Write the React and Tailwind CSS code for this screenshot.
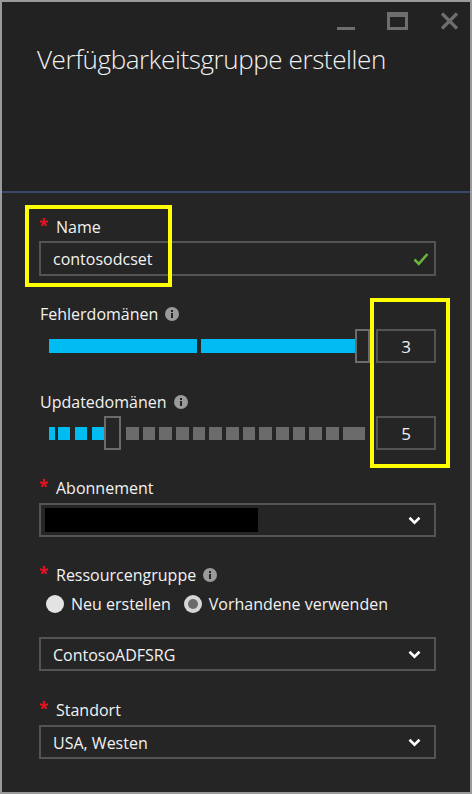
import React from "react";

// small gray info bubble next to some labels
const Info = () => (
    <span className="ml-[7px] inline-flex h-[14px] w-[14px] items-center justify-center rounded-full bg-[#9a9a9a]">
        <svg width="14" height="14" viewBox="0 0 14 14">
            <rect x="6" y="3" width="2" height="2" fill="#252525" />
            <rect x="6" y="6" width="2" height="5" fill="#252525" />
        </svg>
    </span>
);

// label with optional red star
const Label = ({ text, required, info, className }) => (
    <div className={"flex h-[24px] items-center pt-[3px] text-[16px] " + (className || "")}>
        {required ? (
            <span className="w-[17px] self-start pt-[1px] text-[17px] font-bold leading-[18px] text-[#e81123]">*</span>
        ) : (
            <span className="w-[1px]" />
        )}
        <span>{text}</span>
        {info && <Info />}
    </div>
);

const Chevron = () => (
    <svg width="13" height="9" viewBox="0 0 13 9" className="ml-auto">
        <path d="M1.5 1.8 L6.5 6.6 L11.5 1.8" stroke="#ffffff" strokeWidth="2.6" fill="none" />
    </svg>
);

const Dropdown = ({ children, className }) => (
    <div className={"flex h-[34px] items-center border-2 border-[#545454] pr-[13px] " + (className || "")}>
        {children}
        <Chevron />
    </div>
);

const ValueBox = ({ value }) => (
    <div className="ml-auto flex h-[34px] w-[60px] items-center justify-center border-2 border-[#545454] pt-[1px] text-[17px]">{value}</div>
);

const Thumb = ({ w }) => <div className={"h-[34px] shrink-0 border-2 border-[#6b6b6b] bg-[#252525] " + w} />;

const App = () => {
    const graySegs = Array.from({ length: 13 });

    return (
        <div className="relative flex h-[794px] w-[472px] flex-col border-2 border-[#9a9a9a] bg-[#252525] font-['Open_Sans',sans-serif] text-[#f2f2f2]">
            {/* header */}
            <div className="h-[189px] shrink-0 bg-[#222222]">
                <div className="flex h-[18px] items-end justify-end gap-[32px] pr-[11px] mt-[10px]">
                    <div className="h-[3px] w-[18px] bg-[#6e6e6e]" />
                    <div className="h-[18px] w-[21px] border-[3px] border-t-[5px] border-[#6e6e6e]" />
                    <svg width="19" height="18" viewBox="0 0 19 18">
                        <path d="M2 1.5 L17 16.5 M17 1.5 L2 16.5" stroke="#6e6e6e" strokeWidth="3.2" />
                    </svg>
                </div>
                <h1 className="mt-[11px] pl-[35px] text-[26px] font-light leading-[36px] tracking-[-0.4px] text-[#f2f2f2]">Verfügbarkeitsgruppe erstellen</h1>
            </div>
            <div className="h-[2px] shrink-0 bg-[#37486b]" />

            {/* body */}
            <div className="flex flex-col pl-[37px] pr-[34px] pt-[20px]">
                <Label text="Name" required />
                <div className="mt-[4px] flex h-[35px] items-center border-2 border-[#545454] pl-[12px] pr-[5px] pt-[1px] text-[16px]">
                    <span>contosodcset</span>
                    <svg width="16" height="14" viewBox="0 0 16 14" className="ml-auto">
                        <path d="M1.5 7.5 L5.8 11.8 L14.5 2" stroke="#6ab43e" strokeWidth="2.6" fill="none" />
                    </svg>
                </div>

                <Label text="Fehlerdomänen" info className="mt-[24px]" />
                <div className="mt-[5px] flex items-center pl-[10px]">
                    <div className="h-[14px] w-[148px] bg-[#00bcf2]" />
                    <div className="ml-[4px] h-[14px] w-[154px] bg-[#00bcf2]" />
                    <Thumb w="w-[15px]" />
                    <ValueBox value="3" />
                </div>

                <Label text="Updatedomänen" info className="mt-[25px]" />
                <div className="mt-[4px] flex items-center pl-[10px]">
                    <div className="h-[13px] w-[6px] bg-[#00bcf2]" />
                    <div className="ml-[3px] h-[13px] w-[12px] bg-[#00bcf2]" />
                    <div className="ml-[5px] h-[13px] w-[12px] bg-[#00bcf2]" />
                    <div className="ml-[5px] h-[13px] w-[12px] bg-[#00bcf2]" />
                    <Thumb w="w-[17px]" />
                    <div className="ml-[5px] flex gap-[4px]">
                        {graySegs.map((_, i) => (
                            <div key={i} className="h-[13px] w-[12.67px] bg-[#6b6b6b]" />
                        ))}
                        <div className="h-[13px] w-[22px] bg-[#6b6b6b]" />
                    </div>
                    <ValueBox value="5" />
                </div>

                <Label text="Abonnement" required className="mt-[24px]" />
                <Dropdown className="mt-[5px]">
                    <div className="ml-[4px] h-[24px] w-[213px] bg-black" />
                </Dropdown>

                <Label text="Ressourcengruppe" required info className="mt-[24px]" />
                <div className="mt-[7px] flex h-[24px] items-center pl-[7px] text-[16px]">
                    <span className="h-[18px] w-[18px] rounded-full bg-[#e3e3e3]" />
                    <span className="ml-[7px]">Neu erstellen</span>
                    <span className="ml-[13px] flex h-[18px] w-[18px] items-center justify-center rounded-full bg-[#d6d6d6]">
                        <span className="h-[10px] w-[10px] rounded-full bg-[#6b6b6b]" />
                    </span>
                    <span className="ml-[7px]">Vorhandene verwenden</span>
                </div>

                <Dropdown className="mt-[21px] pl-[12px] pt-[1px] text-[16px]">
                    <span>ContosoADFSRG</span>
                </Dropdown>

                <Label text="Standort" required className="mt-[25px]" />
                <Dropdown className="mt-[5px] pl-[12px] pt-[1px] text-[16px]">
                    <span>USA, Westen</span>
                </Dropdown>
            </div>

            {/* yellow highlight annotations */}
            <div className="absolute left-[23px] top-[203px] h-[82px] w-[147px] border-[4px] border-[#ffff00]" />
            <div className="absolute left-[368px] top-[296px] h-[170px] w-[80px] border-[4px] border-[#ffff00]" />
        </div>
    );
};

export default App;
